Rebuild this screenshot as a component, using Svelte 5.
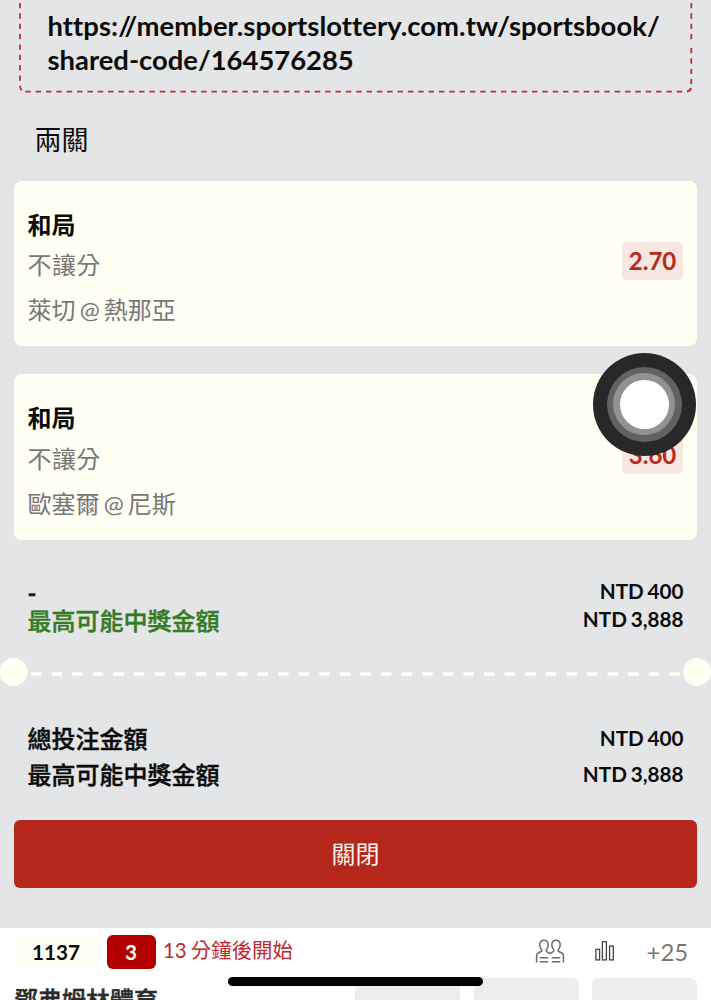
<script>
  const bets = [
    { pick: '和局', market: '不讓分', match: '萊切 @ 熱那亞', odds: '2.70' },
    { pick: '和局', market: '不讓分', match: '歐塞爾 @ 尼斯', odds: '3.60' }
  ];
</script>

<div class="screen">
  <main class="slip">
    <section class="share">
      <svg class="outline" width="711" height="96" viewBox="0 0 711 96" fill="none" stroke="#c32a38" stroke-width="1.8">
        <path d="M20 3V86" stroke-dasharray="5.3 5.05" />
        <path d="M20 86Q20.3 89.5 22 90.3" />
        <path d="M25.3 91.7H686" stroke-dasharray="5.5 4.84" />
        <path d="M687 91.5Q690.5 91 691 88" />
        <path d="M691.3 3V42" stroke-dasharray="5.3 5.05" />
        <path d="M691.3 48V85" stroke-dasharray="5.3 5.05" />
      </svg>
      <div class="host">https://member.sportslottery.com.tw/sportsbook/</div>
      <div>shared-code/164576285</div>
    </section>

    <h2>兩關</h2>

    <div class="cards">
      {#each bets as bet}
        <article class="card">
          <div class="info">
            <div class="pick">{bet.pick}</div>
            <div class="market">{bet.market}</div>
            <div class="match">{bet.match}</div>
          </div>
          <div class="odds">{bet.odds}</div>
        </article>
      {/each}
    </div>

    <section class="sum first">
      <div class="row top"><span>-</span><b>NTD 400</b></div>
      <div class="row win"><span>最高可能中獎金額</span><b>NTD 3,888</b></div>
    </section>

    <svg class="tear" width="711" height="28" viewBox="0 0 711 28">
      <circle cx="13.6" cy="14" r="14" fill="#fffff3" />
      <circle cx="697.2" cy="14" r="14" fill="#fffff3" />
      <path d="M31 16H681" stroke="#fffff3" stroke-width="3.6" stroke-dasharray="10.5 10.09" />
    </svg>

    <section class="sum total">
      <div class="row"><span>總投注金額</span><b>NTD 400</b></div>
      <div class="row"><span>最高可能中獎金額</span><b>NTD 3,888</b></div>
    </section>

    <button type="button">關閉</button>
  </main>

  <footer>
    <div class="meta">
      <span class="code">1137</span>
      <span class="min">3</span>
      <span class="start">13 分鐘後開始</span>
      <svg class="people" width="30" height="26" viewBox="0 0 30 26" fill="none" stroke="#6a6a6a" stroke-width="1.5">
        <path d="M1.6 24.5V18Q1.6 15.6 3.6 14.7L6.6 13.3Q7.4 12.7 6.4 11.2Q4.6 9.4 4.8 6.4Q5.1 2.3 9 2.3Q12.9 2.3 13.2 6.4Q13.4 9.4 11.6 11.2Q10.6 12.7 11.4 13.3L15 15.7L18.6 13.3Q19.4 12.7 18.4 11.2Q16.6 9.4 16.8 6.4Q17.1 2.3 21 2.3Q24.9 2.3 25.2 6.4Q25.4 9.4 23.6 11.2Q22.6 12.7 23.4 13.3L26.4 14.7Q28.4 15.6 28.4 18V24.5" />
        <path d="M4.7 19.8H13.2M4.7 23.8H13.2M16.8 19.8H25.3M16.8 23.8H25.3" />
      </svg>
      <svg class="stats" width="20" height="22" viewBox="0 0 20 22" fill="none" stroke="#444" stroke-width="1.3">
        <rect x=".9" y="9.3" width="3.7" height="10.6" />
        <rect x="7.4" y="1.7" width="4" height="18.2" />
        <rect x="14.6" y="6.1" width="3.7" height="13.8" />
      </svg>
      <span class="more">+25</span>
    </div>
    <div class="teams">
      <span class="team">鄧弗姆林體育</span>
      <i></i><i></i><i></i>
    </div>
  </footer>

  <div class="touch"><div><div><div></div></div></div></div>
  <div class="home"></div>
</div>

<style>
  :global(body) { margin: 0; overflow: hidden; }
  .screen {
    position: relative;
    width: 711px;
    height: 1000px;
    overflow: hidden;
    display: flex;
    flex-direction: column;
    background: #e4e5e7;
    color: #0b0b0b;
    font-family: Lato, "Noto Sans CJK TC", sans-serif;
    font-variant-ligatures: none;
  }
  .slip { height: 928px; flex: none; display: flex; flex-direction: column; }
  .share {
    position: relative;
    height: 85px;
    padding: 9px 0 0 47.5px;
    flex: none;
    font-size: 27.4px;
    line-height: 34px;
    font-weight: 700;
    white-space: nowrap;
  }
  .host { letter-spacing: .06px; }
  .outline { position: absolute; left: 0; top: 0; }
  h2 {
    margin: 26px 0 0 34.5px;
    height: 40px;
    line-height: 40px;
    font-size: 27px;
    font-weight: 400;
    padding-bottom: 20.5px;
  }
  .cards { display: flex; flex-direction: column; gap: 28px; padding: 0 14px; }
  .card {
    box-sizing: border-box;
    height: 165.5px;
    border-radius: 8px;
    background: #fffff4;
    padding: 26px 14px 0 13.5px;
    display: flex;
    justify-content: space-between;
  }
  .info { font-size: 24px; line-height: 36px; white-space: nowrap; }
  .pick { font-weight: 700; }
  .market, .match { color: #777; font-weight: 400; }
  .market { margin-top: 4.5px; letter-spacing: .4px; }
  .match { margin-top: 9px; word-spacing: -2px; }
  .odds {
    width: 61px;
    height: 38px;
    margin-top: 35.5px;
    border-radius: 5px;
    background: #f7e7e0;
    color: #b9271d;
    font-size: 24px;
    font-weight: 700;
    line-height: 38px;
    text-align: center;
  }
  .sum { padding: 0 27.5px; font-size: 24px; }
  .row { display: flex; justify-content: space-between; height: 36px; line-height: 36px; font-weight: 500; }
  .row span { -webkit-text-stroke: .4px currentColor; }
  .row b { font-size: 20.7px; font-weight: 700; word-spacing: -1.3px; }
  .first { padding-top: 33.5px; height: 84.5px; }
  .row.top { height: 28px; }
  .row.top span { font-weight: 700; line-height: 39px; }
  .row.win { height: 28px; }
  .win span { color: #347b23; line-height: 39px; }
  .tear { display: block; flex: none; }
  .total { padding-top: 34.5px; height: 99.5px; }
  .total span { line-height: 38px; }
  button {
    margin: 0 14px;
    height: 68px;
    flex: none;
    border: 0;
    border-radius: 6px;
    background: #b5271b;
    color: #fff4ee;
    font: 400 24px/68px Lato, "Noto Sans CJK TC", sans-serif;
    padding: 0;
  }
  footer { height: 72px; background: #fff; overflow: hidden; }
  .meta { display: flex; height: 48px; align-items: flex-start; padding-left: 14px; }
  .code, .min { height: 34px; line-height: 34px; margin-top: 7px; text-align: center; font-size: 20.7px; font-weight: 700; }
  .code { width: 84px; background: #fffff5; border-radius: 5px; }
  .min { width: 49px; margin-left: 8.5px; border-radius: 6px; background: #b40000; color: #fffff4; }
  .start { margin-left: 7.5px; width: 371.5px; font-size: 20.4px; line-height: 44px; font-weight: 400; color: #c3262d; white-space: nowrap; word-spacing: -1px; }
  .people { margin-top: 10px; }
  .stats { margin: 12px 0 0 30px; }
  .more { margin-left: 32px; line-height: 47px; font-size: 24px; color: #777; }
  .teams { display: flex; padding-left: 14px; }
  .team { width: 341.2px; font-size: 24px; line-height: 36px; margin-top: 6px; color: #2b2b2b; font-weight: 500; -webkit-text-stroke: .4px currentColor; }
  .teams i { width: 105px; height: 60px; margin: 2px 13.5px 0 0; flex: none; background: #ededed; border-radius: 6px; }
  .touch {
    position: absolute;
    left: 592.5px;
    top: 352.5px;
    width: 103px;
    height: 103px;
    border-radius: 50%;
    background: #292829;
    display: grid;
    place-items: center;
  }
  .touch div { border-radius: 50%; display: grid; place-items: center; }
  .touch > div { width: 75px; height: 75px; background: #626163; }
  .touch > div > div { width: 62.5px; height: 62.5px; background: #929193; }
  .touch > div > div > div { width: 49px; height: 49px; background: #fff; }
  .home {
    position: absolute;
    left: 228px;
    top: 977px;
    width: 255px;
    height: 9px;
    border-radius: 5px;
    background: #000;
  }
</style>
